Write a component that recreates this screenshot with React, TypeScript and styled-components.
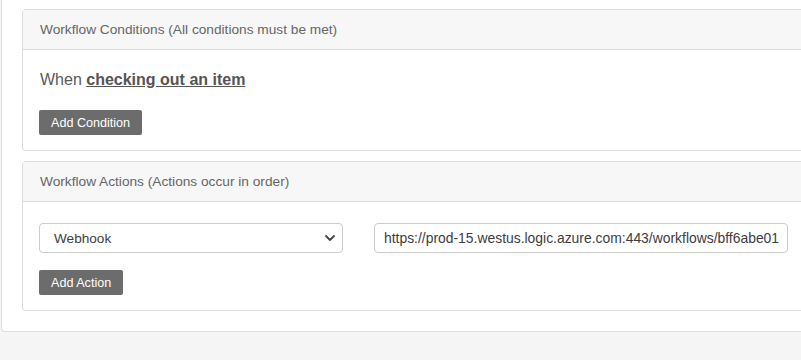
import React from "react";
import styled, { createGlobalStyle } from "styled-components";

const Global = createGlobalStyle`
  html, body { margin: 0; padding: 0; background: #f5f5f5; }
  body { font-family: "Liberation Sans", Arial, sans-serif; overflow: hidden; }
  * { box-sizing: border-box; }
`;

const Page = styled.div`
  width: 801px;
  height: 360px;
  overflow: hidden;
  padding-left: 1px;
`;

const Container = styled.div`
  width: 860px;
  background: #fff;
  border: 1px solid #ddd;
  border-top: 0;
  border-radius: 0 0 4px 4px;
  padding: 9px 20px 20px 20px;
  display: flex;
  flex-direction: column;
  gap: 10px;
`;

const Card = styled.section`
  border: 1px solid #ddd;
  border-radius: 3px;
  background: #fff;
  width: 900px;
`;

const CardHeader = styled.div`
  height: 40px;
  background: #f7f7f7;
  border-bottom: 1px solid #ddd;
  display: flex;
  align-items: center;
  padding-left: 17px;
  font-size: 13.7px;
  color: #666;
`;

const CardBody = styled.div`
  padding: 20px 16px 15px 16px;
  display: flex;
  flex-direction: column;
  align-items: flex-start;
`;

const Sentence = styled.div`
  font-size: 16px;
  line-height: 19px;
  color: #5a5a5a;
  margin-bottom: 21px;
  padding-left: 1px;
`;

const Trigger = styled.a`
  font-weight: bold;
  text-decoration: underline;
  color: #555;
  cursor: pointer;
`;

const Button = styled.button`
  height: 25px;
  padding: 0 12px;
  background: #6c6c6c;
  color: #fff;
  border: 0;
  border-radius: 2px;
  font-family: inherit;
  font-size: 12.6px;
  cursor: pointer;
`;

const ActionRow = styled.div`
  display: flex;
  gap: 31px;
  margin-top: 1px;
  margin-bottom: 17px;
`;

const SelectBox = styled.div`
  position: relative;
  width: 304px;
  height: 30px;
  border: 1px solid #ccc;
  border-radius: 4px;
  background: #fff;
  display: flex;
  align-items: center;
  padding-left: 14px;
  font-size: 13.6px;
  color: #3d3d3d;
`;

const Chevron = styled.svg`
  position: absolute;
  right: 6px;
  top: 10px;
`;

const UrlInput = styled.div`
  width: 414px;
  height: 30px;
  border: 1px solid #ccc;
  border-radius: 4px;
  background: #fff;
  display: flex;
  align-items: center;
  padding-left: 9px;
  font-size: 13.9px;
  color: #3d3d3d;
  white-space: nowrap;
  overflow: hidden;
`;

export default function App() {
  return (
    <>
      <Global />
      <Page>
        <Container>
          <Card>
            <CardHeader>Workflow Conditions (All conditions must be met)</CardHeader>
            <CardBody>
              <Sentence>
                When <Trigger>checking out an item</Trigger>
              </Sentence>
              <Button>Add Condition</Button>
            </CardBody>
          </Card>
          <Card>
            <CardHeader>Workflow Actions (Actions occur in order)</CardHeader>
            <CardBody>
              <ActionRow>
                <SelectBox>
                  Webhook
                  <Chevron width="12" height="8" viewBox="0 0 12 8">
                    <path d="M2 2 L6 6 L10 2" fill="none" stroke="#444" strokeWidth="1.8" strokeLinecap="round" strokeLinejoin="round" />
                  </Chevron>
                </SelectBox>
                <UrlInput>https://prod-15.westus.logic.azure.com:443/workflows/bff6abe01</UrlInput>
              </ActionRow>
              <Button>Add Action</Button>
            </CardBody>
          </Card>
        </Container>
      </Page>
    </>
  );
}
